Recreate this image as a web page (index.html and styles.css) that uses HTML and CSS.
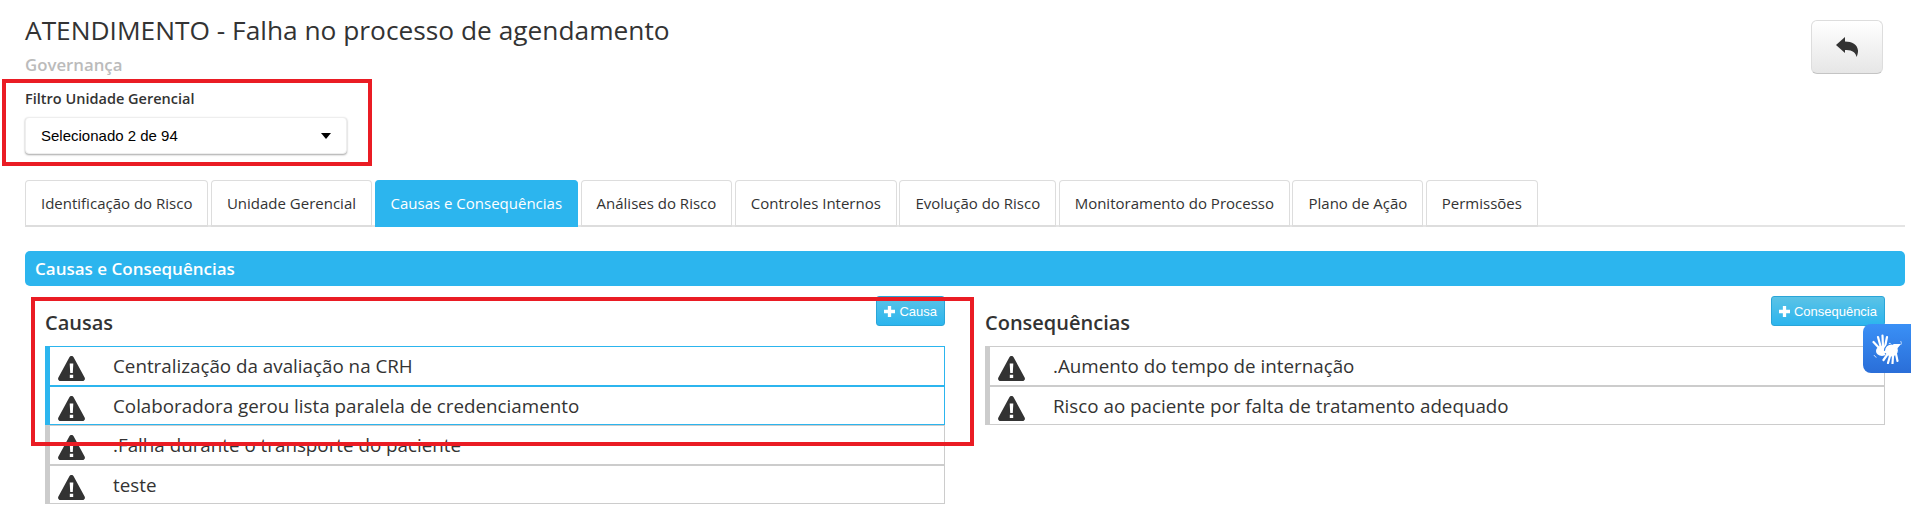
FILE: index.html
```html
<!DOCTYPE html>
<html lang="pt-BR">
<head>
  <meta charset="utf-8"/>
  <link rel="stylesheet" href="styles.css">
  <title>Causas e Consequências</title>
</head>
<body>
  <svg class="icon-defs" width="0" height="0">
    <symbol id="warning" viewBox="0 0 27 25">
      <path fill-rule="evenodd" d="M13.5 0c.9 0 1.7.5 2.1 1.2l11 20.300c.9 1.600-.2 3.500-2.100 3.500H2.500C.6 25-.5 23.100.4 21.500l11-20.300C11.800.5 12.600 0 13.500 0zM11.700 7.500l.5 9.500h2.600l.5-9.500zM11.800 18.700v3.200h3.400v-3.200z"/>
    </symbol>
    <symbol id="plus" viewBox="0 0 10 10">
      <path d="M3.500 0h3v3.500H10v3H6.500V10h-3V6.500H0v-3h3.500z"/>
    </symbol>
  </svg>

  <div class="page">
    <div class="page-head">
      <div class="titles">
        <h1>ATENDIMENTO - Falha no processo de agendamento</h1>
        <div class="subtitle">Governança</div>
      </div>
      <a class="back-btn" href="#">
        <svg width="22" height="20" viewBox="0 0 22 20"><path d="M0 8 9 0v4.500c7 0 12.500 3 13 9 .1 2-.4 4.500-1.500 6.500-.6-4.500-4.500-7.500-11.500-7V16z"/></svg>
      </a>
    </div>

    <div class="filter">
      <label>Filtro Unidade Gerencial</label>
      <div class="filter-select">
        <span>Selecionado 2 de 94</span>
        <i class="caret"></i>
      </div>
    </div>

    <div class="tabs">
      <a class="tab" href="#">Identificação do Risco</a>
      <a class="tab" href="#">Unidade Gerencial</a>
      <a class="tab active" href="#">Causas e Consequências</a>
      <a class="tab" href="#">Análises do Risco</a>
      <a class="tab" href="#">Controles Internos</a>
      <a class="tab" href="#">Evolução do Risco</a>
      <a class="tab" href="#">Monitoramento do Processo</a>
      <a class="tab" href="#">Plano de Ação</a>
      <a class="tab" href="#">Permissões</a>
    </div>

    <div class="panel-title">Causas e Consequências</div>

    <div class="columns">
      <div class="column">
        <div class="column-head">
          <h2>Causas</h2>
          <a class="add-btn" href="#"><svg width="11" height="11"><use href="#plus"/></svg>Causa</a>
        </div>
        <div class="risk-item selected"><svg class="warn"><use href="#warning"/></svg><span>Centralização da avaliação na CRH</span></div>
        <div class="risk-item selected"><svg class="warn"><use href="#warning"/></svg><span>Colaboradora gerou lista paralela de credenciamento</span></div>
        <div class="risk-item"><svg class="warn"><use href="#warning"/></svg><span>.Falha durante o transporte do paciente</span></div>
        <div class="risk-item"><svg class="warn"><use href="#warning"/></svg><span>teste</span></div>
      </div>
      <div class="column">
        <div class="column-head">
          <h2>Consequências</h2>
          <a class="add-btn" href="#"><svg width="11" height="11"><use href="#plus"/></svg>Consequência</a>
        </div>
        <div class="risk-item"><svg class="warn"><use href="#warning"/></svg><span>.Aumento do tempo de internação</span></div>
        <div class="risk-item"><svg class="warn"><use href="#warning"/></svg><span>Risco ao paciente por falta de tratamento adequado</span></div>
      </div>
    </div>
  </div>

  <!-- red marks drawn over the page -->
  <div class="mark mark-filter"></div>
  <div class="mark mark-causes"></div>

  <div class="libras">
    <svg width="30" height="30" viewBox="0 0 30 30">
      <g stroke="#fff" stroke-width="2.200" stroke-linecap="round" fill="none">
        <!-- back hand -->
        <path d="M9 16 1.500 8M9 14 6 3M11 13 10.500 1.500M13 13 15 3M13 16l5-6"/>
      </g>
      <ellipse cx="10" cy="17" rx="6" ry="5" fill="#fff"/>
      <!-- front hand -->
      <ellipse cx="19.500" cy="16.500" rx="7" ry="6.500" fill="#fff" stroke="#2f80ea" stroke-width="1.200"/>
      <path d="M21 10h8l-5 6zM11 17.500l6-2.500 1 3-6 1.500z" fill="#fff"/>
      <g stroke="#fff" stroke-width="2.200" stroke-linecap="round" fill="none">
        <path d="M15 21l-3.500 5M18 22l-2 7M21 22l-.5 7.500M24 20l1.500 7"/>
      </g>
      <g stroke="#cfe2fb" stroke-width="1" fill="none">
        <path d="M28.500 7c.8 1 1 2 .6 3.500M2 21c.4 1.200 1.200 1.900 2.500 2.300"/>
      </g>
    </svg>
  </div>
</body>
</html>
```

FILE: styles.css
```css
* {
  box-sizing: border-box;
}

body {
  margin: 0;
  background: #fff;
  color: #333;
  font-family: "Open Sans", sans-serif;
  overflow: hidden;
}

a {
  text-decoration: none;
  color: inherit;
}

.icon-defs {
  display: block;
}

.page {
  padding: 0 6px 0 25px;
}

.page-head {
  display: flex;
  justify-content: space-between;
  align-items: flex-start;
  height: 89px;
}

h1 {
  margin: 0;
  padding-top: 14px;
  font-size: 26.300px;
  font-weight: 400;
  line-height: 32px;
  color: #333;
}

.subtitle {
  margin-top: 8px;
  font-size: 16.800px;
  font-weight: 600;
  line-height: 22px;
  color: #bbb;
}

.back-btn {
  display: flex;
  align-items: center;
  justify-content: center;
  width: 72px;
  height: 54px;
  margin: 20px 22px 0 0;
  border: 1px solid #ddd;
  border-bottom-color: #c4c4c4;
  border-radius: 6px;
  background: linear-gradient(#fff, #e6e6e6);
  fill: #333;
}

.filter label {
  display: block;
  font-size: 14.500px;
  font-weight: 600;
  line-height: 20px;
  color: #333;
}

.filter-select {
  display: flex;
  align-items: center;
  justify-content: space-between;
  width: 322px;
  height: 37px;
  margin-top: 8px;
  padding: 0 15px 0 15px;
  border: 1px solid #eee;
  border-radius: 4px;
  background: #fff;
  box-shadow: 0 1px 2px rgba(0, 0, 0, .35);
  font-family: "Liberation Sans", Arial, sans-serif;
  font-size: 15px;
  color: #000;
}

.caret {
  width: 0;
  height: 0;
  border-top: 6px solid #000;
  border-left: 5px solid transparent;
  border-right: 5px solid transparent;
}

.tabs {
  display: flex;
  gap: 2.500px;
  height: 47px;
  margin-top: 26px;
  border-bottom: 2px solid #e4e4e4;
}

.tab {
  height: 47px;
  padding: 0 15px;
  border: 1px solid #ddd;
  border-bottom: 2px solid #ddd;
  border-radius: 4px 4px 0 0;
  background: #fff;
  font-size: 15px;
  line-height: 45px;
  white-space: nowrap;
  color: #333;
}

.tab.active {
  background: #2cb5ee;
  border-color: #2cb5ee;
  color: #fff;
}

.panel-title {
  height: 35px;
  margin-top: 24px;
  padding-left: 10px;
  border-radius: 5px;
  background: #2cb5ee;
  font-size: 17px;
  font-weight: 600;
  line-height: 35px;
  color: #fff;
}

.columns {
  display: grid;
  grid-template-columns: 1fr 1fr;
  gap: 40px;
  margin-top: 10px;
  padding: 0 20px;
}

.column-head {
  display: flex;
  justify-content: space-between;
  align-items: flex-start;
  height: 50px;
}

h2 {
  margin: 0;
  padding-top: 12px;
  font-size: 20px;
  font-weight: 600;
  line-height: 30px;
  color: #333;
}

.add-btn {
  display: flex;
  align-items: center;
  gap: 4px;
  height: 30px;
  padding: 0 7px;
  border: 1px solid #2aa5d8;
  border-radius: 3px;
  background: linear-gradient(#5bc3e6, #2cb5ee);
  font-family: "Liberation Sans", Arial, sans-serif;
  font-size: 13px;
  color: #fff;
  fill: #fff;
}

.risk-item {
  display: flex;
  align-items: center;
  gap: 28px;
  height: 39.500px;
  padding: 1px 0 0 8px;
  border: 1px solid #ccc;
  border-left-width: 5px;
  font-size: 18.800px;
  color: #333;
}

.risk-item.selected {
  border-color: #2cb5ee;
}

.warn {
  flex: none;
  width: 27px;
  height: 25px;
  margin-top: 5px;
  fill: #333;
}

.mark {
  position: absolute;
  z-index: 2;
  border: 4px solid #ea1c24;
  pointer-events: none;
}

.mark-filter {
  top: 79px;
  left: 2px;
  width: 370px;
  height: 87px;
}

.mark-causes {
  top: 297px;
  left: 31px;
  width: 943px;
  height: 149px;
}

.libras {
  position: absolute;
  top: 324px;
  right: 0;
  z-index: 3;
  display: flex;
  align-items: center;
  justify-content: center;
  width: 48px;
  height: 49px;
  border-radius: 8px 0 0 8px;
  background: linear-gradient(#3a90f6, #2a6ed8);
}
```
